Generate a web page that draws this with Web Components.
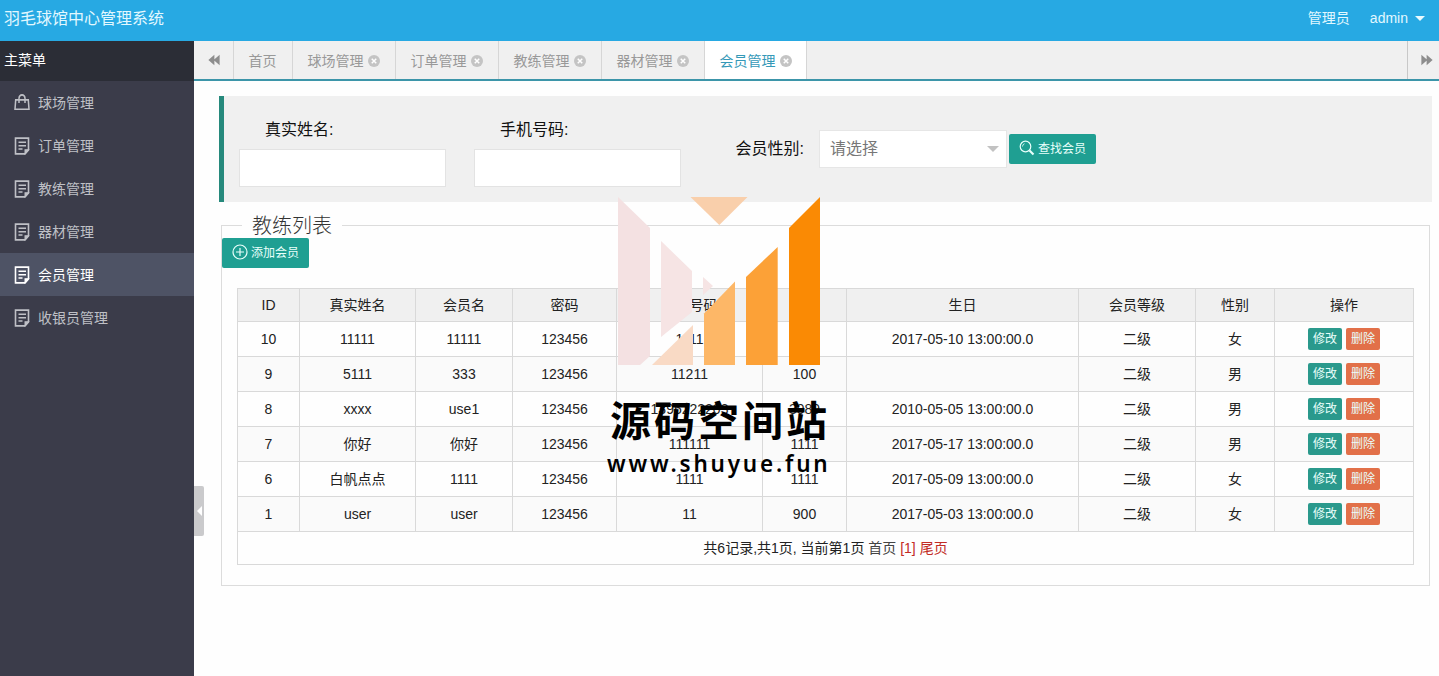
<!DOCTYPE html>
<html lang="zh-CN">
<head>
<meta charset="utf-8">
<title>羽毛球馆中心管理系统</title>
<style>
html,body{margin:0;height:100%;overflow:hidden}
body{font:14px/20px "Liberation Sans","Noto Sans CJK SC",sans-serif;color:#222;background:#fefefe}
</style>
</head>
<body>
<admin-app></admin-app>
<script>
function define(name, html, init) {
  customElements.define(name, class extends HTMLElement {
    connectedCallback() {
      if (this.shadowRoot) return;
      const t = document.createElement('template');
      t.innerHTML = '<style>*{box-sizing:border-box}</style>' + html;
      this.attachShadow({ mode: 'open' }).append(t.content.cloneNode(true));
      if (init) init(this, this.shadowRoot);
    }
  });
}

const ICONS = {
  bag: '<path d="M1.700 5.500h12.600l.7 8.800H1zM5 8.500V4a3 3.200 0 0 1 6 0v4.500" stroke-width="1.500"/>',
  note: '<path d="M1.500 1h13v10.500L11 15H1.500z" stroke-width="1.600"/><path d="M14.500 11.300H11V15z" fill="currentColor" stroke-width="1"/><path d="M4.500 4.700h7.500M4.500 7.700h7.500M4.500 10.700h4" stroke-width="1.400"/>',
  plus: '<circle cx="8" cy="8" r="7"/><path d="M8 4v8M4 8h8"/>',
  search: '<circle cx="6.500" cy="6.500" r="5.300"/><path d="M10.500 10.500l4 4" stroke-width="2.200"/><path d="M3.500 6.500a3 3 0 0 1 2-2.800" stroke-width=".8"/>',
  close: '<circle cx="8" cy="8" r="8" fill="#c4c4c4" stroke="none"/><path d="M5 5l6 6M11 5l-6 6" stroke="#fff" stroke-width="2"/>',
  back: '<path d="M8.500 1v14L.5 8zM15.500 1v14L7.500 8z" fill="currentColor" stroke="none"/>',
  next: '<path d="M.5 1v14l8-7zM7.500 1v14l8-7z" fill="currentColor" stroke="none"/>'
};
define('ui-icon', `<style>:host{display:inline-block;width:16px;height:16px;flex:none}svg{display:block;width:100%;height:100%}</style>
<svg viewBox="0 0 16 16" fill="none" stroke="currentColor" stroke-width="1.2" preserveAspectRatio="none"></svg>`,
  (el, r) => { r.querySelector('svg').innerHTML = ICONS[el.getAttribute('name')]; });

define('top-bar', `<style>
:host{display:flex;align-items:center;height:41px;padding:0 14px 5px 4px;background:#27a9e3;color:#e2f8ff;font-size:14px}
.t{font-size:16px;flex:1;padding-top:1px}.u{margin-left:20px}
i{width:0;height:0;border:5px solid transparent;border-top:5px solid #e8faff;border-bottom:0;margin-left:7px}
</style><span class="t"><slot></slot></span><span>管理员</span><span class="u">admin</span><i></i>`);

define('side-item', `<style>
:host{display:flex;align-items:center;height:43px;padding-left:14px;color:#bfc0c6}
:host([active]){background:#4e5365;color:#fff}
ui-icon{margin-right:8px;height:18px;margin-top:1px}
ui-icon[name=bag]{height:17px;margin-top:0}
</style><ui-icon></ui-icon><slot></slot>`,
  (el, r) => {
    const old = r.querySelector('ui-icon'), ic = document.createElement('ui-icon');
    ic.setAttribute('name', el.getAttribute('icon') || 'note');
    old.replaceWith(ic);
  });

define('side-menu', `<style>
:host{display:block;width:194px;background:#3b3c4a;flex:none}
h2{margin:0;height:40px;padding-left:4px;background:#2b2d36;color:#fff;font:inherit;line-height:38px}
</style><h2>主菜单</h2><slot></slot>`);

define('tab-item', `<style>
:host{display:flex;align-items:center;width:103px;padding-left:14.500px;padding-top:2px;border-right:1px solid #d6d6d6;color:#999}
:host([plain]){width:59px}
:host([active]){background:#fff;color:#3599b8;width:102px}
ui-icon{width:12px;height:12px;margin-left:4px}
:host([plain]) ui-icon{display:none}
</style><slot></slot><ui-icon name="close"></ui-icon>`);

define('tab-bar', `<style>
:host{display:flex;height:40px;background:#f0f0f0;border-bottom:2px solid #3c95a9}
.n{width:40px;display:flex;align-items:center;justify-content:center;color:#8d8d8d;border-right:1px solid #d6d6d6}
.n ui-icon{width:12px;height:12px}
.e{margin-left:auto;width:32px;border:0;border-left:1px solid #c8c8c8;padding-left:7px}
</style><span class="n"><ui-icon name="back"></ui-icon></span><slot></slot><span class="n e"><ui-icon name="next"></ui-icon></span>`);

define('ui-button', `<style>
:host{display:inline-flex;align-items:center;justify-content:center;width:87px;height:30px;border-radius:2px;background:#1f9f92;color:#e9fffb;font-size:12px;line-height:18px;flex:none}
:host([mini]){width:34px;height:22px;background:#2a998c;vertical-align:top}
:host([danger]){background:#e27049;margin-left:4px}
::slotted(ui-icon){margin:-2px 3px 0 0}
</style><slot></slot>`);

define('text-field', `<style>
:host{display:block;width:207px;margin-right:28px}
label{display:block;padding:1px 0 0 26px;font-size:16px;line-height:20px;color:#111;height:30px}
.b{height:38px;border:1px solid #e3e3e3;background:#fff}
</style><label><slot></slot></label><div class="b"></div>`);

define('search-panel', `<style>
:host{display:flex;height:106px;margin:15px 7px 0 25px;padding:23px 0 0 15px;background:#f0f0f0;border-left:5px solid #26897c}
.l{font-size:16px;color:#111;margin:20px 0 0 26.500px;width:83.500px}
.s{display:flex;align-items:center;justify-content:space-between;width:188px;height:38px;margin:11px 2px 0 0;padding:0 7px 0 10px;border:1px solid #e6e6e6;background:#fff;font-size:16px;color:#777}
.s i{width:0;height:0;border:6px solid transparent;border-top-color:#c2c2c2;border-bottom:0}
ui-button{margin-top:15px}
</style><text-field>真实姓名:</text-field><text-field>手机号码:</text-field>
<span class="l">会员性别:</span><div class="s"><span>请选择</span><i></i></div>
<ui-button><ui-icon name="search"></ui-icon>查找会员</ui-button>`);

const COLS = [62, 116, 97, 104, 146, 84, 232, 117, 79, 139];
const HEAD = ['ID', '真实姓名', '会员名', '密码', '手机号码', '', '生日', '会员等级', '性别', '操作'];
const ROWS = [
  ['10', '11111', '11111', '123456', '1111', '', '2017-05-10 13:00:00.0', '二级', '女'],
  ['9', '5111', '333', '123456', '11211', '100', '', '二级', '男'],
  ['8', 'xxxx', 'use1', '123456', '1395222203', '3989', '2010-05-05 13:00:00.0', '二级', '男'],
  ['7', '你好', '你好', '123456', '111111', '1111', '2017-05-17 13:00:00.0', '二级', '男'],
  ['6', '白帆点点', '1111', '123456', '1111', '1111', '2017-05-09 13:00:00.0', '二级', '女'],
  ['1', 'user', 'user', '123456', '11', '900', '2017-05-03 13:00:00.0', '二级', '女']
];
define('member-table', `<style>
:host{display:grid;grid-template-columns:${COLS.map(c => c + 'px').join(' ')};width:1177px;border-left:1px solid #d9d9d9;border-top:1px solid #d9d9d9}
div{display:flex;align-items:center;justify-content:center;height:35px;border-right:1px solid #d9d9d9;border-bottom:1px solid #d9d9d9;white-space:pre}
.h{height:33px;background:#f0f0f0}
.odd{background:#fafafa}
.f{grid-column:1/-1;height:33px}
.g{color:#444}.r{color:#c22b24}
</style>`, (el, r) => {
  const cell = (cls, html) => `<div class="${cls}">${html}</div>`;
  const ops = '<ui-button mini>修改</ui-button><ui-button mini danger>删除</ui-button>';
  const t = document.createElement('template');
  t.innerHTML = HEAD.map(h => cell('h', h)).join('') +
    ROWS.map((row, i) => [...row, ops].map(c => cell(i % 2 ? 'odd' : '', c)).join('')).join('') +
    cell('f', '<span>共6记录,共1页, 当前第1页 <span class="g">首页</span> <span class="r">[1] 尾页</span></span>');
  r.append(t.content);
});

define('list-panel', `<style>
:host{display:block;margin:13px 9px 0 27px}
fieldset{margin:0;padding:0;border:1px solid #dcdcdc;height:371px;min-width:0}
legend{margin-left:20px;padding:1px 10px 0;font-size:20px;line-height:20px;font-weight:300;height:20px;color:#333}
ui-button{display:flex;margin-top:3px}
member-table{margin:20px 0 0 15px}
</style><fieldset><legend>教练列表</legend>
<ui-button><ui-icon name="plus"></ui-icon>添加会员</ui-button>
<member-table></member-table></fieldset>`);

define('site-watermark', `<style>
:host{position:absolute;left:600px;top:190px;width:240px;height:300px;color:#000;white-space:nowrap}
svg{display:block;width:240px;height:180px}
.a{font:bold 41px/60px "Noto Sans CJK SC",sans-serif;letter-spacing:3px;padding-left:10px;margin-top:18px;height:60px}
.b{font:600 22.500px/30px "Noto Sans",sans-serif;letter-spacing:2.800px;padding-left:7px;margin-top:1px}
</style><svg viewBox="600 190 240 180">
<path fill="#f4e1e2" d="M618 197l32 31v128l-10 9h-22z"/>
<path fill="#f6e4e4" d="M661 241l31 30v41l-31 25zM703 277l10 9-10 9z"/>
<path fill="#f9cfab" d="M690.500 197h57L719.300 225z"/>
<path fill="#f9dac5" d="M652 365l41-40v40z"/>
<path fill="#fdb767" d="M704 313.500l31-32V365h-31z"/>
<path fill="#fca137" d="M746 277l31.700-30v118H746z"/>
<path fill="#fa8a04" d="M789 228l31-31v168h-31z"/>
</svg><div class="a">源码空间站</div><div class="b">www.shuyue.fun</div>`);

define('collapse-handle', `<style>
:host{position:absolute;left:194px;top:486px;width:10px;height:50px;background:#cacacc;border-radius:0 2px 2px 0;display:flex;align-items:center;justify-content:center}
i{border:5px solid transparent;border-right-color:#fff;border-left:0}
</style><i></i>`);

define('admin-app', `<style>
:host{display:flex;flex-direction:column;width:1439px;height:676px;position:relative;overflow:hidden}
.m{display:flex;flex:1}
main{flex:1;min-width:0}
</style><top-bar>羽毛球馆中心管理系统</top-bar>
<div class="m"><side-menu>
<side-item icon="bag">球场管理</side-item><side-item>订单管理</side-item><side-item>教练管理</side-item>
<side-item>器材管理</side-item><side-item active>会员管理</side-item><side-item>收银员管理</side-item>
</side-menu><main><tab-bar>
<tab-item plain>首页</tab-item><tab-item>球场管理</tab-item><tab-item>订单管理</tab-item>
<tab-item>教练管理</tab-item><tab-item>器材管理</tab-item><tab-item active>会员管理</tab-item>
</tab-bar><search-panel></search-panel><list-panel></list-panel></main></div>
<collapse-handle></collapse-handle><site-watermark></site-watermark>`);
</script>
</body>
</html>
